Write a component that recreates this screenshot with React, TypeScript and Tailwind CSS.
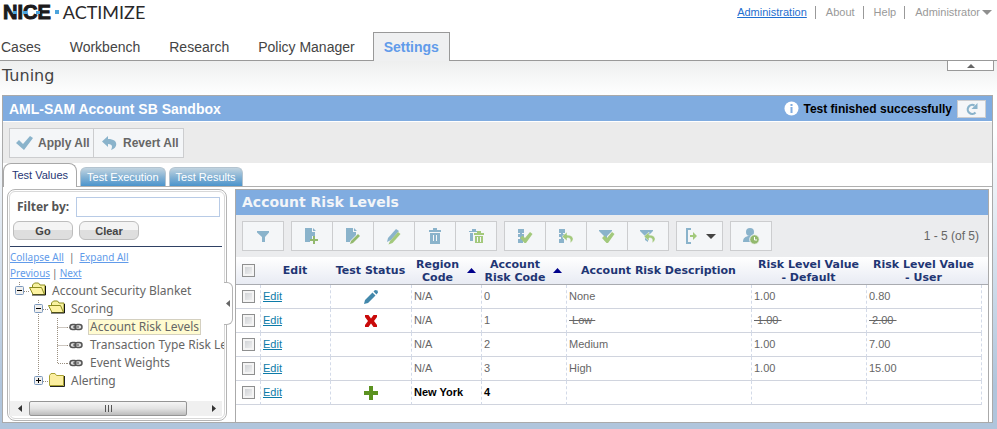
import { useState, type ReactNode } from "react";

const ARIAL = "font-['Liberation_Sans',Arial,sans-serif]";
const VERDANA = "font-['DejaVu_Sans',Verdana,sans-serif]";
const TAHOMA = "font-['Noto_Sans',Tahoma,sans-serif]";

const BLUE = "#8ab3cb";
const GREEN = "#93b96e";

/* ---------- toolbar icons ---------- */

function Icon({ children, label }: { children: ReactNode; label?: string }) {
  return (
    <svg width="18" height="18" viewBox="0 0 18 18" aria-label={label} aria-hidden={!label}>
      {children}
    </svg>
  );
}

const funnel = "M1 3h13v1l-5 5v6l-3-2V9L1 4z";

function FilterIcon() {
  return (
    <Icon>
      <path d="M3 4h12v1.5L11 10v5H8v-5L3 5.500z" fill={BLUE} />
    </Icon>
  );
}
function PageAddIcon() {
  return (
    <Icon>
      <path d="M2 1h7v4h3v4H9v3H7v3H2z M10 1l3 3h-3z" fill={BLUE} />
      <path d="M10 9h2v3h3v2h-3v3h-2v-3H7v-2h3z" fill={GREEN} />
    </Icon>
  );
}
function PageEditIcon() {
  return (
    <Icon>
      <path d="M2 1h7v4h3v3l-6 6v1H2z M10 1l3 3h-3z" fill={BLUE} />
      <path d="M7 14l7-7 2 2-7 7-3 1z" fill={GREEN} />
    </Icon>
  );
}
function PencilsIcon() {
  return (
    <Icon>
      <path d="M3 11l8-9 3 2-8 9-4 2z" fill={BLUE} />
      <path d="M5 14l8-9 2.500 2-8 9-4 1.500z" fill="#a3c97c" />
    </Icon>
  );
}
function TrashIcon() {
  return (
    <Icon>
      <path d="M3 3h4V1h4v2h4v2H3zM4 6h10v11H4z" fill={BLUE} />
      <path d="M7.500 8v6M10.500 8v6" stroke="#f4f6f8" />
    </Icon>
  );
}
function TrashAllIcon() {
  return (
    <Icon>
      <path d="M2 4h3V2h4v2h3v1H2zM3 6h3v8H3z" fill={BLUE} />
      <path d="M7 6h3V4h4v2h3v2H7zM8 9h8v7H8z" fill="#a3c97c" />
      <path d="M10.500 10v5M13.500 10v5" stroke="#f4f6f8" />
    </Icon>
  );
}
const stack = "M2 2h6v4H2zM2 7h6v3H2zM2 12h5v4H2zM4 5h2v7H4z";
const undo = "M10 8V5l-5 4.500 5 4.500v-3c3-.5 4 1 3 5 4.500-2 4.500-8-3-8z";
const check = "M4 11l2.500-2.500 2.500 2.500L14 5l2.500 2L10 16H8.500z";
function ListCheckIcon() {
  return (
    <Icon>
      <path d={stack} fill={BLUE} />
      <path d={check} fill="#a3c97c" />
    </Icon>
  );
}
function ListUndoIcon() {
  return (
    <Icon>
      <path d={stack} fill={BLUE} />
      <path d={undo} fill="#a3c97c" stroke="#f4f6f8" strokeWidth="0.500" />
    </Icon>
  );
}
function FilterCheckIcon() {
  return (
    <Icon>
      <path d={funnel} fill={BLUE} />
      <path d={check} fill="#a3c97c" />
    </Icon>
  );
}
function FilterUndoIcon() {
  return (
    <Icon>
      <path d={funnel} fill={BLUE} />
      <path d={undo} fill="#a3c97c" stroke="#f4f6f8" strokeWidth="0.500" />
    </Icon>
  );
}
function ExportIcon() {
  return (
    <svg width="34" height="18" viewBox="0 0 34 18" aria-hidden="true">
      <path d="M8 2H4v14h4" fill="none" stroke={BLUE} strokeWidth="2" />
      <path d="M7 8h3V5l4 4-4 4v-3H7z" fill="#a3c97c" />
      <path d="M23 7h10l-5 5z" fill="#444" />
    </svg>
  );
}
function UserClockIcon() {
  return (
    <Icon>
      <circle cx="8" cy="5" r="4" fill={BLUE} />
      <path d="M1 15c0-4 2-5 5-6h4c3 1 4 2 4 6z" fill={BLUE} />
      <circle cx="12.500" cy="12.500" r="4.800" fill={GREEN} stroke="#f4f6f8" />
      <path d="M12.500 10v3H15" fill="none" stroke="#fff" />
    </Icon>
  );
}

function ToolButton({ label, wide, children }: { label: string; wide?: boolean; children: ReactNode }) {
  return (
    <button
      type="button"
      aria-label={label}
      className={`box-content flex h-[28px] items-center justify-center bg-[#f4f6f8] ${wide ? "w-[45px]" : "w-10"}`}
    >
      {children}
    </button>
  );
}

function ToolGroup({ children }: { children: ReactNode }) {
  return (
    <div className="flex divide-x divide-[#cccdcf] border border-[#cccdcf]">{children}</div>
  );
}

/* ---------- tree ---------- */

const DOT = { stroke: "#9a8f80", strokeDasharray: "1 1" };

function Cell({ children }: { children?: ReactNode }) {
  return (
    <svg width="19" height="18" viewBox="0 0 19 18" className="shrink-0 overflow-visible" aria-hidden="true">
      {children}
    </svg>
  );
}
function VLine() {
  return (
    <Cell>
      <path d="M9.500 0v18" {...DOT} />
    </Cell>
  );
}
function Branch({ last }: { last?: boolean }) {
  return (
    <Cell>
      <path d={last ? "M9.500 0v9.500h10" : "M9.500 0v18M9.500 9.500h10"} fill="none" {...DOT} />
    </Cell>
  );
}
function Toggle({ plus, root }: { plus?: boolean; root?: boolean }) {
  return (
    <Cell>
      <path d={plus || root ? "M9.500 0v5M14 9.500h5" : "M9.500 0v18M14 9.500h5"} fill="none" {...DOT} />
      <rect x="5.500" y="4.500" width="8" height="8" rx="1" fill="#f1f0ee" stroke="#7b98bd" />
      <path d="M7 8.500h5" stroke="#000" />
      {plus && <path d="M9.500 6v5" stroke="#000" />}
    </Cell>
  );
}
function Folder({ open }: { open?: boolean }) {
  return (
    <Cell>
      {open ? (
        <g transform="translate(-1 -1)">
          <path d="M4.500 13V4l2-2h4l1.500 2h5v9z" fill="#f8f2a0" stroke="#8c8c20" />
          <path d="M1.500 6.500h12l3 7H5z" fill="#fdf3a2" stroke="#8c8c20" />
          <path d="M4 14h13.500V5" fill="none" stroke="#111" />
        </g>
      ) : (
        <g transform="translate(-1 0)">
          <path d="M2.500 13.500v-10l1.500-2h4l1.500 2h7v10z" fill="#fbeea0" stroke="#a8a030" />
          <path d="M3 14.500h14.500V4" fill="none" stroke="#222" />
        </g>
      )}
    </Cell>
  );
}
function Chain() {
  return (
    <Cell>
      <path d="M0 9.500h3" {...DOT} />
      <rect x="3" y="6.500" width="7" height="5" rx="2.500" fill="#ddd" stroke="#555" strokeWidth="1.500" />
      <rect x="8" y="6.500" width="7" height="5" rx="2.500" fill="#ddd" stroke="#555" strokeWidth="1.500" />
      <path d="M6 9h6" stroke="#444" />
    </Cell>
  );
}
function TreeRow({ icons, text, selected }: { icons: ReactNode; text: string; selected?: boolean }) {
  return (
    <li className="flex h-[18px] items-center whitespace-nowrap">
      {icons}
      <span
        className={
          selected
            ? "ml-0.5 border border-[#d4d0c0] bg-[#fffbd0] px-px leading-[14px]"
            : "ml-0.5 px-0.5 leading-[14px]"
        }
      >
        {text}
      </span>
    </li>
  );
}

/* ---------- table ---------- */

type Row = {
  status?: "edited" | "deleted" | "added";
  region: string;
  code: string;
  description: string;
  def: string;
  user: string;
};

const rows: Row[] = [
  { status: "edited", region: "N/A", code: "0", description: "None", def: "1.00", user: "0.80" },
  { status: "deleted", region: "N/A", code: "1", description: "Low", def: "1.00", user: "2.00" },
  { region: "N/A", code: "2", description: "Medium", def: "1.00", user: "7.00" },
  { region: "N/A", code: "3", description: "High", def: "1.00", user: "15.00" },
  { status: "added", region: "New York", code: "4", description: "", def: "", user: "" },
];

function StatusIcon({ status }: { status?: Row["status"] }) {
  if (!status) return null;
  return (
    <svg width="16" height="16" viewBox="0 0 16 16" className="mx-auto block" role="img" aria-label={status}>
      {status === "edited" && (
        <path d="M1 15l1-4 7.500-7.500 3 3L5 14zM10.500 2.500L12 1l2.500.5.5 2-1.500 2z" fill="#4388ab" />
      )}
      {status === "deleted" && (
        <path d="M2 2h3.500L8 5.500 10.500 2H14v2l-3 4 3 4v2h-3.500L8 10.500 5.500 14H2v-2l3-4-3-4z" fill="#c90a0a" />
      )}
      {status === "added" && <path d="M6 1h4v5h5v4h-5v5H6v-5H1V6h5z" fill="#5b9220" />}
    </svg>
  );
}

function Tick({ label }: { label: string }) {
  return (
    <input
      type="checkbox"
      aria-label={label}
      className="mx-auto block size-[13px] appearance-none border border-[#8e8f8f] bg-linear-to-br from-[#c9ccd0] to-[#f6f6f6] shadow-[inset_0_0_0_2px_#f4f4f4] checked:bg-[#4388ab]"
    />
  );
}

function SortLabel({ lines }: { lines: [string, string] }) {
  return (
    <span className="flex items-center justify-center gap-2">
      <span>
        {lines[0]}
        <br />
        {lines[1]}
      </span>
      <svg width="9" height="5" viewBox="0 0 9 5" aria-hidden="true">
        <path d="M0 5l4.500-5L9 5z" fill="#00008b" />
      </svg>
    </span>
  );
}

function Struck({ on, text }: { on: boolean; text: string }) {
  return on ? <s className="whitespace-pre">{` ${text} `}</s> : <>{text}</>;
}

const CELL = "h-6 border-b border-[#d0d4de] border-l border-l-[#d3dae8] [border-left-style:dashed] px-0.5 py-0 text-left align-middle";

function RiskTable() {
  return (
    <table className="w-full table-fixed border-separate border-spacing-0 text-[11px] leading-[13px] text-[#666]">
      <colgroup>
        <col className="w-6" />
        <col className="w-[70px]" />
        <col className="w-[81px]" />
        <col className="w-[70px]" />
        <col className="w-[85px]" />
        <col />
        <col className="w-[115px]" />
        <col className="w-[115px]" />
        <col className="w-[7px]" />
      </colgroup>
      <thead className={`${VERDANA} text-[11px] font-bold text-[#1f3674]`}>
        <tr className="[&>th]:h-[28px] [&>th]:border-b [&>th]:border-[#a9abb0] [&>th]:bg-linear-to-b [&>th]:from-white [&>th]:to-[#e8ebf3] [&>th]:p-0">
          <th>
            <Tick label="Select all" />
          </th>
          <th>Edit</th>
          <th>Test Status</th>
          <th>
            <SortLabel lines={["Region", "Code"]} />
          </th>
          <th>
            <SortLabel lines={["Account", "Risk Code"]} />
          </th>
          <th>Account Risk Description</th>
          <th>
            Risk Level Value
            <br />- Default
          </th>
          <th>
            Risk Level Value
            <br />- User
          </th>
          <th aria-hidden="true" />
        </tr>
      </thead>
      <tbody>
        {rows.map((r) => {
          const gone = r.status === "deleted";
          const fresh = r.status === "added" ? "font-bold text-black" : "";
          return (
            <tr key={r.code}>
              <td className="h-6 border-b border-[#d0d4de] p-0 align-middle">
                <Tick label={`Select row ${r.code}`} />
              </td>
              <td className={CELL}>
                <a href="#edit" className="text-[#0d7ba8] underline">
                  Edit
                </a>
              </td>
              <td className={CELL}>
                <StatusIcon status={r.status} />
              </td>
              <td className={`${CELL} ${fresh}`}>{r.region}</td>
              <td className={`${CELL} ${fresh}`}>{r.code}</td>
              <td className={CELL}>
                <Struck on={gone} text={r.description} />
              </td>
              <td className={CELL}>
                <Struck on={gone} text={r.def} />
              </td>
              <td className={CELL}>
                <Struck on={gone} text={r.user} />
              </td>
              <td className="border-l border-dashed border-[#d3dae8] p-0" />
            </tr>
          );
        })}
      </tbody>
    </table>
  );
}

/* ---------- page parts ---------- */

function Header() {
  return (
    <header className="flex h-[61px] flex-col justify-between border-b border-[#999] bg-white">
      <div className="flex h-6 items-center justify-between pl-[3px] pr-[5px]">
        <div className="flex items-center gap-1" aria-label="NICE Actimize">
          <span className="relative text-[20px] leading-6 font-bold text-[#1c1a1c] [-webkit-text-stroke:1px_#1c1a1c]">
            NICE
            <span className="absolute top-[11px] left-[10px] h-[3px] w-1 bg-[#4ba3dc]" />
            <span className="absolute top-[11px] left-[20px] h-[3px] w-1 bg-[#4ba3dc]" />
            <span className="absolute top-[11px] left-[33px] h-[3px] w-1 bg-[#4ba3dc]" />
          </span>
          <span className="size-1 bg-[#4ba3dc]" />
          <span className="font-[Lato,sans-serif] text-[18px] leading-6 text-[#2a282a]">ACTIMIZE</span>
        </div>
        <nav className="flex items-center text-[11px] leading-[13px] text-[#999]" aria-label="Account">
          <a href="#administration" className="text-[#1f6fd0] underline">Administration</a>
          <span className="ml-2 mr-[10px] h-[13px] w-px bg-[#999]" />
          <a href="#about">About</a>
          <span className="ml-2 mr-[10px] h-[13px] w-px bg-[#999]" />
          <a href="#help">Help</a>
          <span className="ml-2 mr-[10px] h-[13px] w-px bg-[#999]" />
          <button type="button" className="flex items-center gap-0.5">
            Administrator
            <svg width="10" height="5" viewBox="0 0 10 5" aria-hidden="true">
              <path d="M0 0h10L5 5z" fill="#8f8f8f" />
            </svg>
          </button>
        </nav>
      </div>
      <nav className="-mb-px flex h-[29px] items-center text-sm text-[#444]" aria-label="Main">
        <div className="flex gap-[29px] pl-px">
          <a href="#cases">Cases</a>
          <a href="#workbench">Workbench</a>
          <a href="#research">Research</a>
          <a href="#policy">Policy Manager</a>
        </div>
        <a
          href="#settings"
          className="ml-[18px] flex h-full items-center border border-b-0 border-[#999] bg-[#eff0f1] px-[10px] font-bold text-[#619bea]"
        >
          Settings
        </a>
      </nav>
    </header>
  );
}

function ActionBar() {
  return (
    <div className="flex h-[42px] items-center border-t border-white bg-[#ebebeb] px-1.5 text-xs font-bold text-[#666]">
      <div className="flex divide-x divide-[#cccdcf] border border-[#cccdcf] bg-[#f4f6f8]">
        <button type="button" className="flex h-[28px] w-[84px] items-center gap-[5px] pl-1.5 whitespace-nowrap">
          <svg width="17" height="14" viewBox="0 0 17 14" aria-hidden="true">
            <path d="M0 7l3-3 4 4 7-8 3 2-9 12z" fill={BLUE} />
          </svg>
          Apply All
        </button>
        <button type="button" className="flex h-[28px] w-[89px] items-center gap-1.5 pl-2 whitespace-nowrap">
          <svg width="15" height="14" viewBox="0 0 15 14" aria-hidden="true">
            <path d="M6 3V0L0 5.500 6 11V8c4 0 5 2 3 6 7-2 8-11-3-11z" fill={BLUE} />
          </svg>
          Revert All
        </button>
      </div>
    </div>
  );
}

function Tabs() {
  const [tab, setTab] = useState("Test Values");
  return (
    <div role="tablist" className="flex h-[24px] items-end gap-[3px] border-b border-[#b0b0b0] text-[11px]">
      {["Test Values", "Test Execution", "Test Results"].map((t) => (
        <button
          key={t}
          type="button"
          role="tab"
          aria-selected={t === tab}
          onClick={() => setTab(t)}
          className={
            t === tab
              ? "-mb-px h-6 rounded-t-lg border border-b-0 border-[#a8a8a8] bg-white px-2 text-[#1f3674]"
              : "h-[19px] rounded-t-md border border-b-0 border-[#b4c4d0] bg-linear-to-b from-[#c2d4e0] via-[#84b2d4] to-[#4a94cc] px-[6px] text-white"
          }
        >
          {t}
        </button>
      ))}
    </div>
  );
}

const PILL =
  "h-[19px] w-[60px] rounded-md border border-[#bdbdbd] bg-linear-to-b from-[#f4f4f4] from-50% to-[#dedede] to-50% text-[11px] leading-[16px] font-bold text-[#444]";

function Sidebar() {
  return (
    <aside className="relative mt-0.5 mb-px ml-1 flex w-[220px] shrink-0 flex-col rounded-lg border border-[#b4b4b4] bg-white p-px">
      <div className="flex grow flex-col rounded-md border border-[#d8d8d8] pb-0.5">
        <div className="flex h-[29px] items-center justify-between pl-[7px] pr-1">
          <label htmlFor="filter" className={`${TAHOMA} text-xs font-bold text-[#555]`}>
            Filter by:
          </label>
          <input id="filter" type="text" className="h-5 w-36 border border-[#b8cbe6] bg-white px-1 text-xs outline-none" />
        </div>
        <div className="mr-0.5 flex h-[26px] gap-1.5 border-b border-[#2f4164] pl-[3px]">
          <button type="button" className={PILL}>Go</button>
          <button type="button" className={PILL}>Clear</button>
        </div>
        <div className={`${TAHOMA} pt-0.5 text-[10px] leading-4 text-[#619bea]`}>
          <div className="flex items-center">
            <a href="#collapse" className="underline">Collapse All</a>
            <span className="mx-[5px] text-[#666]">|</span>
            <a href="#expand" className="underline">Expand All</a>
          </div>
          <div className="flex items-center gap-0.5">
            <a href="#previous" className="underline">Previous</a>
            <span className="text-[#666]">|</span>
            <a href="#next" className="underline">Next</a>
          </div>
        </div>
        <ul className={`${TAHOMA} overflow-hidden pt-px text-xs text-[#666]`}>
          <TreeRow icons={<><Toggle root /><Folder open /></>} text="Account Security Blanket" />
          <TreeRow icons={<><Cell /><Toggle /><Folder open /></>} text="Scoring" />
          <TreeRow icons={<><Cell /><VLine /><Branch /><Chain /></>} text="Account Risk Levels" selected />
          <TreeRow icons={<><Cell /><VLine /><Branch /><Chain /></>} text="Transaction Type Risk Levels" />
          <TreeRow icons={<><Cell /><VLine /><Branch last /><Chain /></>} text="Event Weights" />
          <TreeRow icons={<><Cell /><Toggle plus /><Folder /></>} text="Alerting" />
        </ul>
        <div className="mt-auto mr-0.5 flex h-[15px] bg-[#f0f0f0]">
          <button type="button" aria-label="Scroll left" className="flex w-[19px] items-center justify-center">
            <svg width="4" height="7" viewBox="0 0 4 7"><path d="M4 0v7L0 3.500z" fill="#333" /></svg>
          </button>
          <div className="flex grow">
            <div className="flex w-[158px] items-center justify-center gap-0.5 rounded-xs border border-[#959595] bg-linear-to-b from-[#f5f5f5] via-[#e3e3e3] to-[#bcbcbc]">
              <span className="h-[7px] w-px bg-[#555]" />
              <span className="h-[7px] w-px bg-[#555]" />
              <span className="h-[7px] w-px bg-[#555]" />
            </div>
          </div>
          <button type="button" aria-label="Scroll right" className="flex w-[17px] items-center justify-center">
            <svg width="4" height="7" viewBox="0 0 4 7"><path d="M0 0v7l4-3.500z" fill="#333" /></svg>
          </button>
        </div>
      </div>
      <button
        type="button"
        aria-label="Collapse tree"
        className="absolute top-[92px] -right-[7px] flex h-[43px] w-[9px] items-center justify-center rounded-r-md border border-l-0 border-[#b4b4b4] bg-white"
      >
        <svg width="4" height="7" viewBox="0 0 4 7" aria-hidden="true">
          <path d="M4 0v7L0 3.500z" fill="#666" />
        </svg>
      </button>
    </aside>
  );
}

function RiskPanel() {
  return (
    <section className="mt-0.5 mr-[3px] ml-2 min-w-0 grow border border-b-0 border-[#aaa] bg-white pb-[17px]">
      <h2 className={`${VERDANA} h-[25px] bg-[#80ace0] pl-1.5 text-sm leading-[25px] font-bold text-[#f2f5f8]`}>
        Account Risk Levels
      </h2>
      <div className="flex h-[42px] items-center justify-between bg-[#ebecee] pr-[9px] pl-1.5">
        <div className="flex gap-[7px]">
          <ToolGroup>
            <ToolButton label="Filter"><FilterIcon /></ToolButton>
          </ToolGroup>
          <ToolGroup>
            <ToolButton label="Add"><PageAddIcon /></ToolButton>
            <ToolButton label="Edit"><PageEditIcon /></ToolButton>
            <ToolButton label="Edit several"><PencilsIcon /></ToolButton>
            <ToolButton label="Delete"><TrashIcon /></ToolButton>
            <ToolButton label="Delete several"><TrashAllIcon /></ToolButton>
          </ToolGroup>
          <ToolGroup>
            <ToolButton label="Apply selected"><ListCheckIcon /></ToolButton>
            <ToolButton label="Revert selected"><ListUndoIcon /></ToolButton>
            <ToolButton label="Apply filtered"><FilterCheckIcon /></ToolButton>
            <ToolButton label="Revert filtered"><FilterUndoIcon /></ToolButton>
          </ToolGroup>
          <ToolGroup>
            <ToolButton label="Export" wide><ExportIcon /></ToolButton>
          </ToolGroup>
          <ToolGroup>
            <ToolButton label="User history"><UserClockIcon /></ToolButton>
          </ToolGroup>
        </div>
        <span className="text-xs text-[#666]">1 - 5 (of 5)</span>
      </div>
      <RiskTable />
    </section>
  );
}

export default function App() {
  return (
    <div className={`${ARIAL} flex min-h-screen flex-col bg-linear-to-b from-white from-30% to-[#b0c5dc] to-90%`}>
      <Header />
      <div className="flex h-[34px] items-start justify-between bg-linear-to-b from-[#eeefef] to-white pr-[3px] pl-0.5">
        <h1 className={`${VERDANA} text-base leading-[30px] text-[#444]`}>Tuning</h1>
        <button
          type="button"
          aria-label="Hide header"
          className="flex h-[10px] w-[47px] items-center justify-center border border-t-0 border-[#999] bg-white"
        >
          <svg width="8" height="4" viewBox="0 0 8 4" aria-hidden="true">
            <path d="M0 4l4-4 4 4z" fill="#666" />
          </svg>
        </button>
      </div>
      <main className="mr-1 ml-0.5 border border-[#aaa] bg-white">
        <div className="flex h-[25px] items-center justify-between bg-[#80ace0] px-1.5">
          <h2 className="text-sm font-bold text-white">AML-SAM Account SB Sandbox</h2>
          <div className="flex items-center text-xs font-bold text-black">
            <svg width="15" height="15" viewBox="0 0 15 15" className="mr-[5px]" aria-hidden="true">
              <circle cx="7.500" cy="7.500" r="7" fill="#fff" />
              <path d="M6.500 3h2v2h-2zM6.500 6h2v6h-2z" fill="#80ace0" />
            </svg>
            Test finished successfully
            <button
              type="button"
              aria-label="Refresh"
              className="ml-[5px] flex h-[18px] w-[29px] items-center justify-center border border-[#cccdcf] bg-[#f4f6f8]"
            >
              <svg width="14" height="14" viewBox="0 0 14 14" aria-hidden="true">
                <path d="M10.500 10.500A4.500 4.500 0 1 1 9.500 3.500" fill="none" stroke={BLUE} strokeWidth="2.200" />
                <path d="M12.500 1v6h-6z" fill={BLUE} />
              </svg>
            </button>
          </div>
        </div>
        <ActionBar />
        <Tabs />
        <div className="flex">
          <Sidebar />
          <RiskPanel />
        </div>
      </main>
    </div>
  );
}
